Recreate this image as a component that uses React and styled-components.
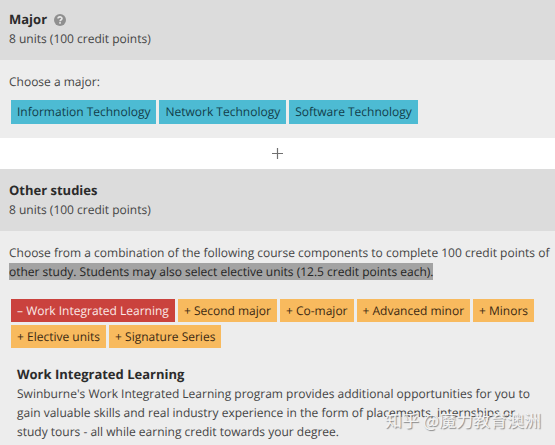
import React, { useState } from 'react';
import styled, { createGlobalStyle } from 'styled-components';

const GlobalStyle = createGlobalStyle`
  * { box-sizing: border-box; }
  body {
    margin: 0;
    background: #ededed;
    color: #444444;
    font: 12px/19px "Open Sans", "Noto Sans", sans-serif;
    text-rendering: geometricPrecision;
  }
  h2, h3, p { margin: 0; }
`;

const Page = styled.main`
  position: relative;
`;

const SectionHeader = styled.header`
  padding: ${(p) => (p.$tall ? '12px 9px' : '10px 9px 12px')};
  background: #dcdcdc;
`;

const Title = styled.h2`
  display: flex;
  align-items: center;
  gap: 7px;
  color: #2b2b2b;
  font-size: 13px;
  line-height: 19px;
`;

const HelpButton = styled.button`
  display: flex;
  padding: 0;
  border: 0;
  background: none;
  cursor: pointer;
`;

const SectionBody = styled.div`
  padding: 12px 4px 14px 9px;
  background: #ededed;
`;

const TagList = styled.div`
  display: flex;
  flex-wrap: wrap;
  gap: 3px;
  margin-top: ${(p) => (p.$spacious ? '18px' : '9px')};
  padding-left: 2px;
`;

const tones = {
  blue: ['#4dbbd3', '#123d4a'],
  amber: ['#f8ba5e', '#3b2913'],
  red: ['#ca423d', '#fbe9e7'],
};

const Tag = styled.button`
  padding: 0 6px;
  border: 0;
  background: ${(p) => tones[p.$tone][0]};
  color: ${(p) => tones[p.$tone][1]};
  font: inherit;
  line-height: ${(p) => (p.$tone === 'blue' ? '24px' : '23px')};
  text-rendering: inherit;
  white-space: nowrap;
  cursor: pointer;
`;

const Joiner = styled.div`
  display: flex;
  align-items: center;
  justify-content: center;
  height: 31px;
  background: #ffffff;
`;

const Marked = styled.mark`
  background: #a3a3a3;
  color: #242424;
`;

const Details = styled.section`
  padding: 17px 8px 0;
`;

const Watermark = styled.div`
  position: absolute;
  right: 14px;
  bottom: 23px;
  color: #f4f4f4;
  font: 17px/24px "Noto Sans CJK SC", sans-serif;
  text-shadow: 1px 1px 1px #888888;
  pointer-events: none;
`;

const majors = ['Information Technology', 'Network Technology', 'Software Technology'];
const components = [
  'Work Integrated Learning', 'Second major', 'Co-major', 'Advanced minor',
  'Minors', 'Elective units', 'Signature Series',
];

function Heading({ title, help, tall }) {
  return (
    <SectionHeader $tall={tall}>
      <Title>
        {title}
        {help && (
          <HelpButton type="button" aria-label="About majors">
            <svg width="12" height="12" viewBox="0 0 12 12" aria-hidden="true">
              <circle cx="6" cy="6" r="6" fill="#8f8f8f" />
              <path d="M4 4.6C4 2.4 8 2.3 8 4.5C8 5.8 6.1 5.7 6.1 7.2" fill="none" stroke="#e8e8e8" strokeWidth="1.6" />
              <rect x="5.2" y="8.1" width="1.7" height="1.6" fill="#e8e8e8" />
            </svg>
          </HelpButton>
        )}
      </Title>
      <p>8 units (100 credit points)</p>
    </SectionHeader>
  );
}

export default function App() {
  const [open, setOpen] = useState('Work Integrated Learning');
  return (
    <Page>
      <GlobalStyle />
      <section>
        <Heading title="Major" help />
        <SectionBody>
          <p>Choose a major:</p>
          <TagList>
            {majors.map((name) => (
              <Tag key={name} type="button" $tone="blue">{name}</Tag>
            ))}
          </TagList>
        </SectionBody>
      </section>
      <Joiner>
        <svg width="11" height="11" viewBox="0 0 11 11" aria-label="plus" role="img">
          <path d="M5.5 0V11M0 5.5H11" stroke="#707070" strokeWidth="1.2" />
        </svg>
      </Joiner>
      <section>
        <Heading title="Other studies" tall />
        <SectionBody>
          <p>
            Choose from a combination of the following course components to complete 100 credit points of{' '}
            <Marked>other study. Students may also select elective units (12.5 credit points each).</Marked>
          </p>
          <TagList $spacious>
            {components.map((name) => (
              <Tag
                key={name}
                type="button"
                $tone={open === name ? 'red' : 'amber'}
                aria-expanded={open === name}
                onClick={() => setOpen(open === name ? '' : name)}
              >
                {open === name ? '–' : '+'} {name}
              </Tag>
            ))}
          </TagList>
          {open === 'Work Integrated Learning' && (
            <Details>
              <Title as="h3">Work Integrated Learning</Title>
              <p>
                Swinburne's Work Integrated Learning program provides additional opportunities for you to
                gain valuable skills and real industry experience in the form of placements, internships or
                study tours - all while earning credit towards your degree.
              </p>
            </Details>
          )}
        </SectionBody>
      </section>
      <Watermark>知乎 @魔力教育澳洲</Watermark>
    </Page>
  );
}
